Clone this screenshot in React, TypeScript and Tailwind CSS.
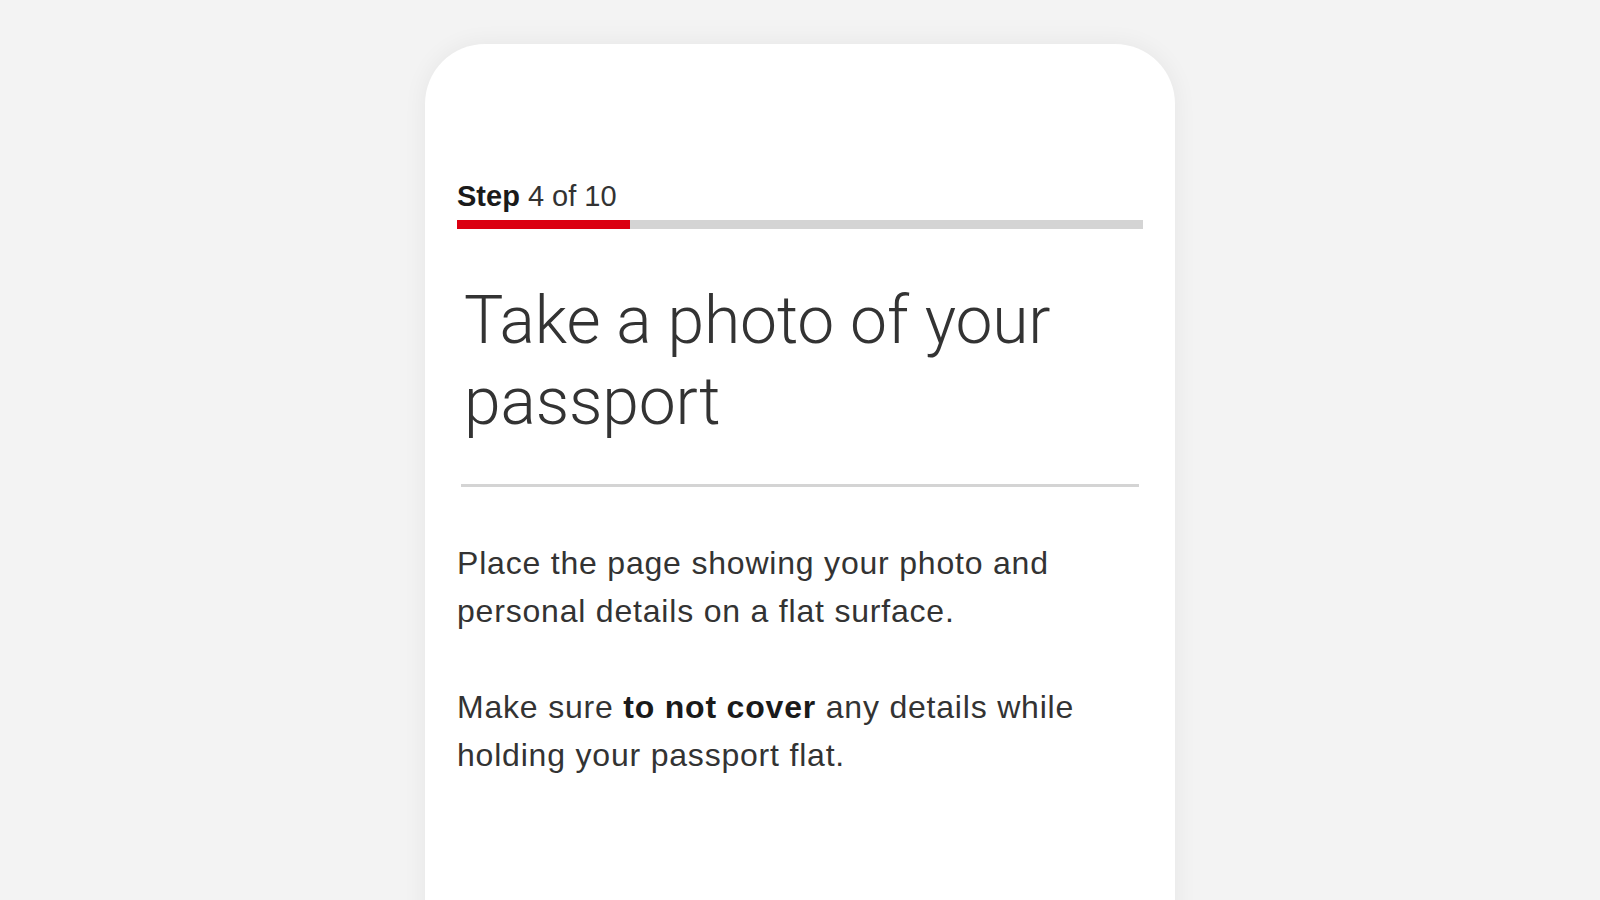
export default function App() {
  return (
    <div className="h-screen w-full overflow-hidden bg-[#f3f3f3] flex justify-center pt-[44px]">
      <div
        className="w-[750px] h-[1000px] bg-white rounded-t-[60px] shadow-[0_0_24px_rgba(0,0,0,0.06)] px-[32px] pt-[136px] text-[#333333]"
        style={{ fontFamily: '"Liberation Sans", Arial, sans-serif' }}
      >
        {/* Step indicator */}
        <p className="text-[29px] leading-[32px] text-[#333333]">
          <span className="font-bold text-[#1a1a1a]">Step</span> 4 of 10
        </p>
        <div className="mt-[8px] h-[9px] w-full bg-[#d4d4d4] flex">
          <div className="h-full w-[173px] bg-[#db0011]" />
        </div>

        {/* Heading */}
        <div className="px-[4px]">
          <h1
            className="mt-[51px] pl-[3px] text-[66px] leading-[81px] font-light tracking-[-0.15px] text-[#333333]"
            style={{ fontFamily: 'Roboto, "Liberation Sans", sans-serif' }}
          >
            Take a photo of your passport
          </h1>
          <div className="mt-[42px] h-[3px] bg-[#d4d4d4]" />
        </div>

        {/* Body */}
        <div className="mt-[52px] text-[32px] leading-[48px] tracking-[0.8px] text-[#333333] max-w-[660px]">
          <p>Place the page showing your photo and personal details on a flat surface.</p>
          <p className="mt-[48px]">
            Make sure <span className="font-bold text-[#1a1a1a]">to not cover</span> any details while holding your passport flat.
          </p>
        </div>
      </div>
    </div>
  )
}
